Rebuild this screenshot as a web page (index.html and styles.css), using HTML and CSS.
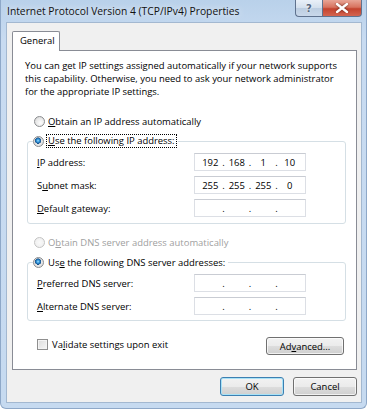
FILE: index.html
```html
<!DOCTYPE html>
<html lang="en">

<head>
    <meta charset="UTF-8">
    <title>Internet Protocol Version 4 (TCP/IPv4) Properties</title>
    <link rel="stylesheet" href="styles.css">
</head>

<body>
    <div class="window">
        <div class="titlebar">
            <span class="title">Internet Protocol Version 4 (TCP/IPv4) Properties</span>
            <div class="caption-buttons">
                <span class="btn-help">?</span>
                <span class="btn-close">
                    <svg viewBox="0 0 16 10" width="16" height="10">
                        <path d="M3 1 L13 9 M13 1 L3 9" />
                    </svg>
                </span>
            </div>
        </div>

        <div class="client">
            <div class="tabs">
                <div class="tab">General</div>
            </div>

            <div class="panel">
                <p class="intro">You can get IP settings assigned automatically if your network supports<br>
                    this capability. Otherwise, you need to ask your network administrator<br>
                    for the appropriate IP settings.</p>

                <div class="radio-row first">
                    <span class="radio"></span>
                    <span><u>O</u>btain an IP address automatically</span>
                </div>

                <!-- IP group -->
                <fieldset class="group">
                    <legend class="radio-row">
                        <span class="radio checked"></span>
                        <span class="focus"><u>U</u>se the following IP address:</span>
                    </legend>
                    <div class="field">
                        <span class="label"><u>I</u>P address:</span>
                        <div class="ipbox">
                            <span class="oct">192</span><span class="dot">.</span>
                            <span class="oct">168</span><span class="dot">.</span>
                            <span class="oct">1</span><span class="dot">.</span>
                            <span class="oct">10</span>
                        </div>
                    </div>
                    <div class="field">
                        <span class="label">S<u>u</u>bnet mask:</span>
                        <div class="ipbox">
                            <span class="oct">255</span><span class="dot">.</span>
                            <span class="oct">255</span><span class="dot">.</span>
                            <span class="oct">255</span><span class="dot">.</span>
                            <span class="oct">0</span>
                        </div>
                    </div>
                    <div class="field">
                        <span class="label"><u>D</u>efault gateway:</span>
                        <div class="ipbox">
                            <span class="oct"></span><span class="dot">.</span>
                            <span class="oct"></span><span class="dot">.</span>
                            <span class="oct"></span><span class="dot">.</span>
                            <span class="oct"></span>
                        </div>
                    </div>
                </fieldset>

                <div class="radio-row disabled dns-auto">
                    <span class="radio"></span>
                    <span>O<u>b</u>tain DNS server address automatically</span>
                </div>

                <!-- DNS group -->
                <fieldset class="group dns">
                    <legend class="radio-row">
                        <span class="radio checked"></span>
                        <span class="plain">Us<u>e</u> the following DNS server addresses:</span>
                    </legend>
                    <div class="field">
                        <span class="label"><u>P</u>referred DNS server:</span>
                        <div class="ipbox">
                            <span class="oct"></span><span class="dot">.</span>
                            <span class="oct"></span><span class="dot">.</span>
                            <span class="oct"></span><span class="dot">.</span>
                            <span class="oct"></span>
                        </div>
                    </div>
                    <div class="field">
                        <span class="label"><u>A</u>lternate DNS server:</span>
                        <div class="ipbox">
                            <span class="oct"></span><span class="dot">.</span>
                            <span class="oct"></span><span class="dot">.</span>
                            <span class="oct"></span><span class="dot">.</span>
                            <span class="oct"></span>
                        </div>
                    </div>
                </fieldset>

                <div class="panel-footer">
                    <div class="check-row">
                        <span class="checkbox"></span>
                        <span>Va<u>l</u>idate settings upon exit</span>
                    </div>
                    <button class="btn advanced">Ad<u>v</u>anced...</button>
                </div>
            </div>

            <div class="dialog-buttons">
                <button class="btn default">OK</button>
                <button class="btn">Cancel</button>
            </div>
        </div>
    </div>
</body>

</html>
```

FILE: styles.css
```css
body {
    margin: 0;
    width: 367px;
    height: 409px;
    overflow: hidden;
    background: #fff;
    font-family: "Open Sans", "Noto Sans", sans-serif;
    font-size: 9.45px;
    color: #000;
}

.window {
    width: 367px;
    height: 409px;
    box-sizing: border-box;
    display: flex;
    flex-direction: column;
    background: linear-gradient(to bottom, #b9d1ea 0, #c8dbf1 40px, #c6daf0 100%);
    border: 1px solid #8ea8c8;
    border-top: none;
    border-radius: 0 0 6px 6px;
}

/* Title bar */
.titlebar {
    height: 22px;
    display: flex;
    justify-content: space-between;
    align-items: flex-start;
    padding-left: 6px;
    padding-right: 4px;
}

.title {
    font-size: 10.3px;
    line-height: 23px;
    color: #111;
    text-shadow: 0 0 6px rgba(255, 255, 255, 0.9);
}

.caption-buttons {
    display: flex;
    height: 17px;
}

.caption-buttons span {
    display: flex;
    align-items: center;
    justify-content: center;
    box-sizing: border-box;
    height: 17px;
    border: 1px solid #5f728e;
    border-top: none;
}

.btn-help {
    width: 27px;
    border-radius: 0 0 0 4px;
    border-right: none !important;
    background: linear-gradient(to bottom, #e9f0f8 0, #d3dfec 50%, #bccde1 51%, #c9d8ea 100%);
    color: #56677f;
    font-family: "DejaVu Sans", sans-serif;
    font-weight: bold;
    font-size: 10px;
    text-shadow: 0 0 2px #fff;
}

.btn-close {
    width: 40px;
    border-radius: 0 0 4px 0;
    background: linear-gradient(to bottom, #e8a596 0, #d8735f 45%, #c4432e 55%, #d36450 100%);
}

.btn-close svg path {
    fill: none;
    stroke: #fff;
    stroke-width: 2.4px;
    stroke-linecap: round;
    filter: drop-shadow(0 0 1px rgba(70, 20, 10, 0.8));
}

/* Client area */
.client {
    flex: 1;
    margin: 0 4px 5px 5px;
    padding: 8px 4px 0 5px;
    background: #f0f0f0;
    border: 1px solid #a3b8d0;
    display: flex;
    flex-direction: column;
}

.tabs {
    display: flex;
    height: 19px;
}

.tab {
    width: 48px;
    height: 20px;
    box-sizing: border-box;
    padding-left: 7px;
    line-height: 18px;
    background: #fff;
    border: 1px solid #898c95;
    border-bottom: none;
    border-radius: 2px 2px 0 0;
    position: relative;
    z-index: 1;
}

.panel {
    height: 320px;
    box-sizing: border-box;
    padding: 8px 11px 0 12px;
    background: #fff;
    border: 1px solid #898c95;
    display: flex;
    flex-direction: column;
}

.intro {
    margin: 0;
    line-height: 13px;
    white-space: nowrap;
}

/* Radio buttons */
.radio-row {
    display: flex;
    align-items: center;
    height: 14px;
    padding-left: 9px;
    gap: 3px;
}

.radio-row.first {
    margin-top: 17px;
    height: 13px;
}

.radio {
    width: 11px;
    height: 11px;
    box-sizing: border-box;
    border-radius: 50%;
    border: 1px solid #8a8c8f;
    background: radial-gradient(circle at 60% 65%, #fdfdfd 0, #e8e8e8 55%, #cfcfcf 100%);
}

.radio.checked {
    background:
        radial-gradient(circle at 45% 40%, #9fe0ff 0, #2b8fd6 1.6px, #1b4f85 3px, transparent 3.3px),
        radial-gradient(circle, #f4f4f4 0, #d8d8d8 100%);
}

.radio-row.disabled {
    color: #a0a0a0;
}

.radio-row.disabled .radio {
    border-color: #c3c3c3;
    background: radial-gradient(circle, #fafafa 0, #ececec 100%);
}

.focus {
    outline: 1px dotted #000;
    outline-offset: 0;
    padding: 0 1px;
    line-height: 12px;
}

.plain {
    padding: 0 1px;
}

/* Group boxes */
.group {
    margin: 6px -1px 0 2px;
    padding: 0 0 6px 0;
    border: 1px solid #d5dfe5;
    border-radius: 3px;
    display: flex;
    flex-direction: column;
    gap: 5px;
}

.group legend {
    margin-left: 5px;
    padding: 0 2px 0 0;
    gap: 3px;
}

.group .field:first-of-type {
    margin-top: 5px;
}

.field {
    display: flex;
    align-items: center;
    height: 18px;
    padding: 0 39px 0 9px;
}

.label {
    flex: 1;
}

.ipbox {
    width: 112px;
    height: 18px;
    box-sizing: border-box;
    display: flex;
    align-items: center;
    padding: 0 4px;
    background: #fff;
    border: 1px solid #dcdfe5;
    border-top-color: #c9ccd3;
}

.oct {
    flex: 1;
    text-align: center;
}

.dot {
    width: 4px;
    text-align: center;
}

.dns-auto {
    margin-top: 12px;
    height: 13px;
}

.group.dns {
    margin-top: 6px;
    padding-bottom: 5px;
}

/* Footer of tab panel */
.panel-footer {
    display: flex;
    justify-content: space-between;
    align-items: flex-start;
    margin-top: 16px;
    padding-right: 1px;
}

.check-row {
    display: flex;
    align-items: center;
    gap: 4px;
    height: 13px;
    margin-top: 1px;
    padding-left: 12px;
}

.checkbox {
    width: 11px;
    height: 11px;
    box-sizing: border-box;
    border: 1px solid #8f8f8f;
    background: linear-gradient(135deg, #dcdcdc 0, #f6f6f6 100%);
    box-shadow: inset 0 0 0 1px #f4f4f4;
}

/* Buttons */
.btn {
    height: 18px;
    padding: 0;
    font-family: inherit;
    font-size: inherit;
    color: #000;
    border: 1px solid #707070;
    border-radius: 3px;
    background: linear-gradient(to bottom, #f2f2f2 0, #ebebeb 50%, #dddddd 51%, #cfcfcf 100%);
    box-shadow: inset 0 0 0 1px rgba(255, 255, 255, 0.7);
}

.advanced {
    width: 78px;
}

.dialog-buttons {
    display: flex;
    justify-content: flex-end;
    gap: 9px;
    margin-top: 7px;
}

.dialog-buttons .btn {
    width: 64px;
    height: 19px;
}

.btn.default {
    border-color: #3c7fb1;
    box-shadow: inset 0 0 0 1px #a8e2f7;
}
```
